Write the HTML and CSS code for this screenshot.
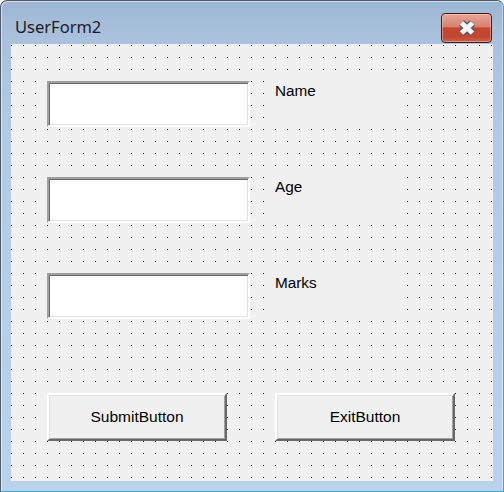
FILE: index.html
```html
<!DOCTYPE html>
<html>
<head>
<meta charset="utf-8">
<title>UserForm2</title>
<link rel="stylesheet" href="styles.css">
</head>
<body>
<div class="window">
  <div class="titlebar">
    <span class="title">UserForm2</span>
    <div class="close">
      <svg width="20" height="18" viewBox="0 0 20 18">
        <path d="M4.5 4 L15.5 14 M15.5 4 L4.5 14" stroke="#50546a" stroke-width="7.4" stroke-linecap="butt" fill="none"/>
        <path d="M4.5 4 L15.5 14 M15.5 4 L4.5 14" stroke="#f4f4f6" stroke-width="5" stroke-linecap="butt" fill="none"/>
      </svg>
    </div>
  </div>
  <div class="client">
    <div class="row">
      <div class="textbox"></div>
      <div class="label">Name</div>
    </div>
    <div class="row">
      <div class="textbox"></div>
      <div class="label">Age</div>
    </div>
    <div class="row">
      <div class="textbox"></div>
      <div class="label">Marks</div>
    </div>
    <div class="buttons">
      <div class="button">SubmitButton</div>
      <div class="button">ExitButton</div>
    </div>
  </div>
</div>
</body>
</html>
```

FILE: styles.css
```css
html, body {
  margin: 0;
  padding: 0;
  background: #ffffff;
}

.window {
  box-sizing: border-box;
  width: 504px;
  height: 492px;
  border: 1px solid #4e5a6a;
  border-right-color: #2eaecd;
  border-bottom-color: #2eaecd;
  border-radius: 7px 7px 0 0;
  background: linear-gradient(to bottom, #9db6d3 0px, #aac2dd 40px, #b3cae4 140px, #bad2ec 100%);
  box-shadow: inset 1px 1px 0 rgba(255, 255, 255, 0.55), inset -1px 0 0 rgba(255, 255, 255, 0.4);
  display: flex;
  flex-direction: column;
}

.titlebar {
  height: 43px;
  display: flex;
  justify-content: space-between;
  align-items: flex-start;
  flex: none;
}

.title {
  font-family: "Noto Sans", "Open Sans", sans-serif;
  font-size: 16.5px;
  line-height: 22px;
  color: #1b1b1b;
  padding: 15px 0 0 14px;
}

.close {
  box-sizing: border-box;
  width: 51px;
  height: 30px;
  margin: 12px 11px 0 0;
  border: 1px solid #4a1c16;
  border-radius: 4px;
  background: linear-gradient(to bottom, #e6a697 0%, #d6816f 45%, #c2472e 50%, #bf4730 80%, #c9634b 100%);
  box-shadow: inset 0 0 0 1px rgba(255, 210, 200, 0.45);
  display: flex;
  align-items: center;
  justify-content: center;
}

.close svg {
  display: block;
}

.client {
  box-sizing: border-box;
  width: 482px;
  height: 437px;
  margin-left: 10px;
  padding: 37px 0 0 36px;
  background-color: #f0f0f0;
  background-image: conic-gradient(at 1px 1px, transparent 75%, #000000 0);
  background-size: 12px 12px;
  background-position: 0 1px;
  flex: none;
}

.row {
  display: flex;
  align-items: flex-start;
  gap: 15px;
  margin-bottom: 50px;
}

.row:nth-child(3) {
  margin-bottom: 74px;
}

.textbox {
  box-sizing: border-box;
  width: 203px;
  height: 46px;
  background: #ffffff;
  border: 2px solid;
  border-color: #a0a0a0 #ffffff #ffffff #a0a0a0;
  box-shadow: inset 1px 1px 0 #696969, inset -1px -1px 0 #e3e3e3;
}

.label {
  box-sizing: border-box;
  width: 140px;
  height: 46px;
  font-family: "Liberation Sans", Arial, sans-serif;
  font-size: 15.3px;
  line-height: 17px;
  color: #000000;
  padding: 1px 0 0 10px;
  background: #f0f0f0;
}

.buttons {
  display: flex;
  gap: 48px;
}

.button {
  box-sizing: border-box;
  width: 180px;
  height: 48px;
  background: #f0f0f0;
  border: 2px solid;
  border-color: #ffffff #696969 #696969 #ffffff;
  box-shadow: inset 1px 1px 0 #e3e3e3, inset -1px -1px 0 #a0a0a0;
  display: flex;
  align-items: center;
  justify-content: center;
  font-family: "Liberation Sans", Arial, sans-serif;
  font-size: 15.5px;
  color: #000000;
}
```
